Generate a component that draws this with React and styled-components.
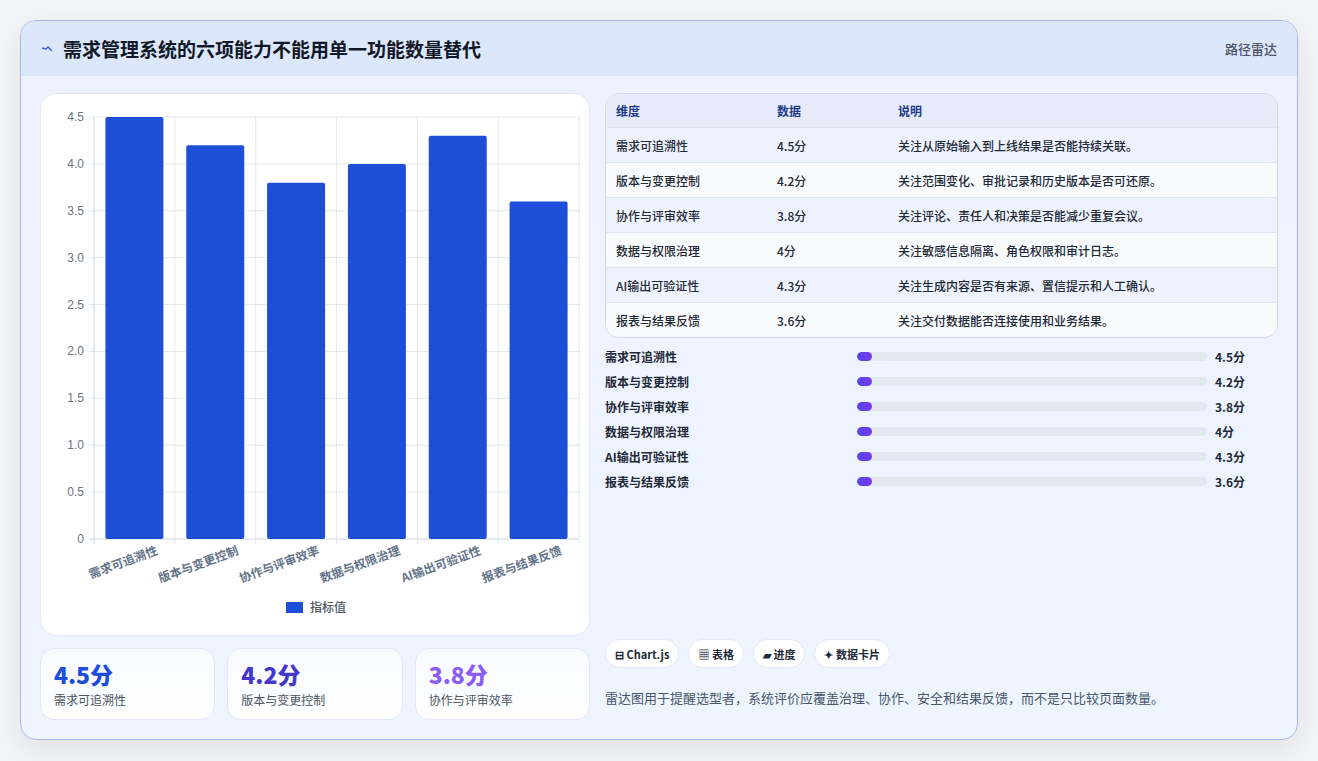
import React from "react";
import styled, { createGlobalStyle } from "styled-components";

const Global = createGlobalStyle`
  html,body{margin:0;padding:0;background:#f3f4f6;}
  body{font-family:"Noto Sans CJK SC","Noto Sans",sans-serif;}
  *{box-sizing:border-box;}
`;

const Page = styled.div`
  width:1318px;height:761px;padding:20px 20px 21px 20px;
`;
const Card = styled.div`
  height:720px;border:1px solid #aab6ee;border-radius:16px;overflow:hidden;
  background:linear-gradient(180deg,#eef2ff 0%,#eef5ff 100%);
  box-shadow:0 10px 30px rgba(0,0,0,0.08);display:flex;flex-direction:column;
`;
const Header = styled.div`
  height:55px;flex:none;background:#dde7fc;display:flex;align-items:center;
  justify-content:space-between;padding:0 20px 0 20px;
`;
const Title = styled.h1`
  margin:0;font-size:19px;font-weight:700;color:#111827;display:flex;align-items:center;gap:10px;
`;
const Tag = styled.span`font-size:13px;color:#4b5563;font-weight:500;`;
const Body = styled.div`
  flex:1;display:grid;grid-template-columns:550px 673px;gap:15px;padding:17px 19px 19px 19px;
`;
const Col = styled.div`display:flex;flex-direction:column;gap:12px;min-height:0;`;
const ChartPanel = styled.div`
  height:543px;background:#fff;border:1px solid #e3e8f5;border-radius:16px;overflow:hidden;
`;
const StatRow = styled.div`display:grid;grid-template-columns:repeat(3,1fr);gap:12px;`;
const Stat = styled.div`
  height:72px;border:1px solid #e3e8f5;border-radius:14px;background:linear-gradient(180deg,#f8faff,#fff);
  padding:10px 13px;display:flex;flex-direction:column;gap:2px;
`;
const StatVal = styled.div`font-size:23px;font-weight:800;color:${p=>p.$c};line-height:30px;font-family:"Noto Sans CJK SC",sans-serif;`;
const StatLabel = styled.div`font-size:12px;color:#4b5563;`;

const Table = styled.div`
  border:1px solid #cfd8ea;border-radius:14px;overflow:hidden;background:#f8fafc;
`;
const TRow = styled.div`
  display:grid;grid-template-columns:161px 121px 1fr;height:35px;align-items:center;padding-left:10px;
  background:${p=>p.$head?"#e6ecfb":p.$alt?"#f8fafc":"#eef2fd"};
  border-top:${p=>p.$head?"none":"1px solid #dfe5f1"};
  font-size:12px;font-weight:${p=>p.$head?700:500};color:${p=>p.$head?"#1e3a8a":"#1f2937"};
  ${p=>p.$head&&"height:33px;"}
`;
const Progress = styled.div`display:flex;flex-direction:column;gap:6px;margin-top:-3px;`;
const PRow = styled.div`
  display:grid;grid-template-columns:252px 350px 1fr;align-items:center;height:19px;
  font-size:12px;font-weight:600;color:#1f2937;
`;
const Track = styled.div`height:9px;border-radius:5px;background:#e2e8f0;position:relative;overflow:hidden;`;
const Fill = styled.div`height:100%;border-radius:5px;background:linear-gradient(90deg,#4f46e5,#7c3aed);`;
const PVal = styled.span`padding-left:8px;font-weight:700;`;
const Spacer = styled.div`flex:1;`;
const Chips = styled.div`display:flex;gap:9px;`;
const Chip = styled.div`
  height:29px;padding:0 9px;border:1px solid #e3e8f5;border-radius:15px;background:#fff;
  font-size:11px;font-weight:700;color:#1f2937;display:flex;align-items:center;gap:4px;
`;
const Note = styled.p`margin:8px 0 13px;font-size:13px;color:#475569;`;

const data = [
  ["需求可追溯性",4.5,"关注从原始输入到上线结果是否能持续关联。"],
  ["版本与变更控制",4.2,"关注范围变化、审批记录和历史版本是否可还原。"],
  ["协作与评审效率",3.8,"关注评论、责任人和决策是否能减少重复会议。"],
  ["数据与权限治理",4,"关注敏感信息隔离、角色权限和审计日志。"],
  ["AI输出可验证性",4.3,"关注生成内容是否有来源、置信提示和人工确认。"],
  ["报表与结果反馈",3.6,"关注交付数据能否连接使用和业务结果。"],
];

function BarChart(){
  const x0=53,x1=538,y0=445,yt=23;
  const sc=(y0-yt)/4.5;
  const cw=(x1-x0)/6;
  const ticks=[0,0.5,1,1.5,2,2.5,3,3.5,4,4.5];
  return (
    <svg width="550" height="543" viewBox="0 0 550 543" style={{display:"block"}}>
      {ticks.map(t=>{const y=y0-t*sc;return <g key={t}>
        <line x1={x0-5} x2={x1} y1={y} y2={y} stroke={t===0?"#cbd5e1":"#e5e7eb"}/>
        <text x={x0-10} y={y+4} fontSize="12" fill="#6b7280" textAnchor="end" fontFamily="Liberation Sans">{t===0?"0":t.toFixed(1)}</text>
      </g>})}
      {[0,1,2,3,4,5,6].map(i=><line key={i} x1={x0+i*cw} x2={x0+i*cw} y1={yt} y2={y0+5} stroke={i===0?"#cbd5e1":"#e5e7eb"}/>)}
      {data.map((d,i)=>{const cx=x0+cw*(i+0.5);const h=d[1]*sc;return <g key={i}>
        <rect x={cx-29} y={y0-h} width="58" height={h} rx="2" fill="#1d4ed8"/>
        <text transform={`translate(${cx+24},${y0+15}) rotate(-20)`} fontSize="12" fontWeight="600" fill="#64748b" textAnchor="end">{d[0]}</text>
      </g>})}
      <rect x="245" y="508" width="17" height="11" fill="#1d4ed8"/>
      <text x="269" y="518" fontSize="12" fill="#4b5563" fontWeight="500">指标值</text>
    </svg>
  );
}

export default function App(){
  return (<>
    <Global/>
    <Page><Card>
      <Header>
        <Title>
          <svg width="12" height="8" viewBox="0 0 12 8"><path d="M1 3 L5 4 L7 2 L11 6" stroke="#3b5bdb" strokeWidth="1.4" fill="none"/></svg>
          需求管理系统的六项能力不能用单一功能数量替代
        </Title>
        <Tag>路径雷达</Tag>
      </Header>
      <Body>
        <Col>
          <ChartPanel><BarChart/></ChartPanel>
          <StatRow>
            <Stat><StatVal $c="#1d4ed8">4.5分</StatVal><StatLabel>需求可追溯性</StatLabel></Stat>
            <Stat><StatVal $c="#4338ca">4.2分</StatVal><StatLabel>版本与变更控制</StatLabel></Stat>
            <Stat><StatVal $c="#8b5cf6">3.8分</StatVal><StatLabel>协作与评审效率</StatLabel></Stat>
          </StatRow>
        </Col>
        <Col>
          <Table>
            <TRow $head><span>维度</span><span>数据</span><span>说明</span></TRow>
            {data.map((d,i)=><TRow key={i} $alt={i%2===1}><span>{d[0]}</span><span>{d[1]}分</span><span>{d[2]}</span></TRow>)}
          </Table>
          <Progress>
            {data.map((d,i)=><PRow key={i}><span>{d[0]}</span><Track><Fill style={{width:"15px"}}/></Track><PVal>{d[1]}分</PVal></PRow>)}
          </Progress>
          <Spacer/>
          <Chips>
            <Chip>⊟ Chart.js</Chip><Chip>▦ 表格</Chip><Chip>▰ 进度</Chip><Chip>✦ 数据卡片</Chip>
          </Chips>
          <Note>雷达图用于提醒选型者，系统评价应覆盖治理、协作、安全和结果反馈，而不是只比较页面数量。</Note>
        </Col>
      </Body>
    </Card></Page>
  </>);
}
